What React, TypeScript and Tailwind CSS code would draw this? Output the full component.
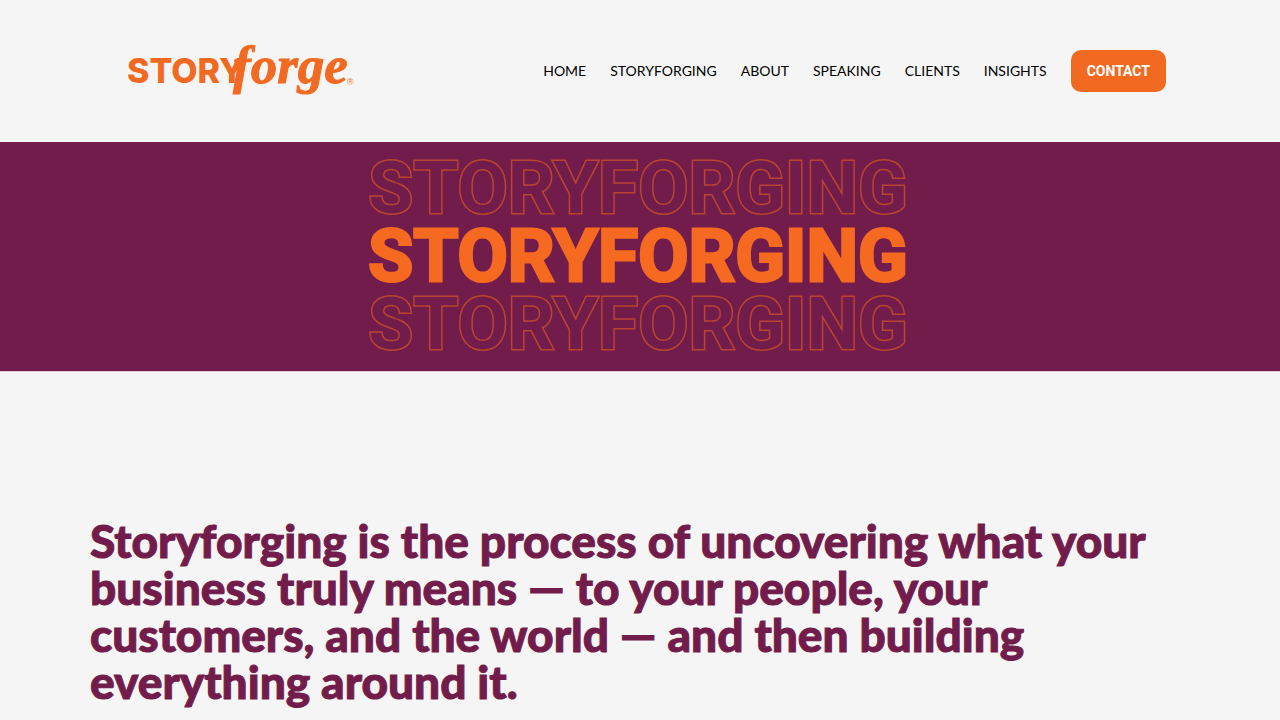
const NAV_LINKS = ["Home", "Storyforging", "About", "Speaking", "Clients", "Insights"];

function Logo() {
  return (
    <a href="#" aria-label="Storyforge" className="block shrink-0 text-[#f26a21]">
      <svg width="232" height="80" viewBox="0 -10 232 80" fill="currentColor" aria-hidden="true">
        <text x="-1" y="42" fontSize="34" fontWeight="800" fontFamily="Inter, sans-serif">STORY</text>
        <text
          x="105"
          y="42"
          fontSize="53"
          fontWeight="700"
          fontStyle="italic"
          fontFamily="'Liberation Serif', serif"
          stroke="currentColor"
          strokeWidth="1"
        >
          forge
        </text>
        <text x="219" y="44" fontSize="9" fontFamily="'Liberation Sans', Arial, sans-serif">®</text>
      </svg>
    </a>
  );
}

function Header() {
  return (
    <header className="mx-auto flex min-h-[142px] max-w-[1100px] items-center justify-between pr-6 pl-[38px]">
      <Logo />
      <nav aria-label="Main" className="flex items-center gap-6 text-sm text-black">
        {NAV_LINKS.map((label) => (
          <a key={label} href="#" className="uppercase">
            {label}
          </a>
        ))}
        <a
          href="#"
          className="rounded-[10px] bg-[#f26a21] px-4 py-[11px] font-[Roboto,sans-serif] font-bold text-white uppercase"
        >
          Contact
        </a>
      </nav>
    </header>
  );
}

function Banner() {
  // fill is painted over the stroke so only the outer edge of each letter shows
  const outline = "text-[#721c4b] [-webkit-text-stroke:3px_#b8452f] [paint-order:stroke_fill]";

  return (
    <section className="flex h-[230px] flex-col items-center border-b border-[#e3cbd8] bg-[#721c4b] pt-3 pr-1 font-[Roboto,sans-serif] text-[73px] leading-[68px] font-bold">
      <span aria-hidden="true" className={outline}>STORYFORGING</span>
      <h1 className="text-[#f56a20] [-webkit-text-stroke:3px_#f56a20]">STORYFORGING</h1>
      <span aria-hidden="true" className={outline}>STORYFORGING</span>
    </section>
  );
}

export default function App() {
  return (
    <div className="min-h-screen bg-[#f5f5f5] font-[Lato,sans-serif]">
      <Header />
      <Banner />
      <main className="mx-auto max-w-[1100px] pt-[145px]">
        <h2 className="text-[46px] leading-[47px] font-black text-[#721c4b] [-webkit-text-stroke:1px_#721c4b]">
          Storyforging is the process of uncovering what your business truly means — to your people, your customers,
          and the world — and then building everything around it.
        </h2>
      </main>
    </div>
  );
}
